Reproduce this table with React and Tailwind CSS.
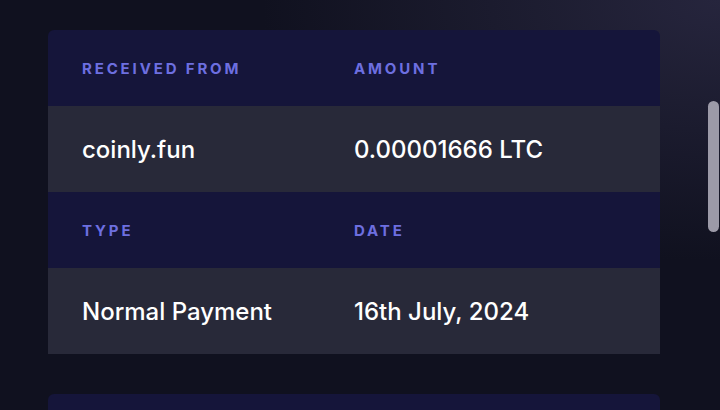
import React from 'react';

const rows = [
  { labels: ['Received From', 'Amount'], values: ['coinly.fun', '0.00001666 LTC'] },
  { labels: ['Type', 'Date'], values: ['Normal Payment', '16th July, 2024'] },
];

const App = () => {
  return (
    <div
      className="relative w-[720px] h-[410px] overflow-hidden bg-[#10111f] bg-[radial-gradient(ellipse_at_100%_0%,#26253d_0%,#10111f_45%)] pl-[48px] pt-[30px]"
      style={{ fontFamily: 'Inter, "Noto Sans", sans-serif' }}
    >
      {/* Details card */}
      <div className="w-[612px] rounded-t-[6px] overflow-hidden">
        {rows.map((row, i) => (
          <div key={i}>
            <div className="grid grid-cols-[272px_1fr] h-[76px] items-center px-[34px] bg-[#15153a]">
              {row.labels.map((l) => (
                <span
                  key={l}
                  className="text-[15px] font-bold uppercase tracking-[0.19em] text-[#6d6fe0] leading-none"
                >
                  {l}
                </span>
              ))}
            </div>
            <div className="grid grid-cols-[272px_1fr] h-[86px] items-center px-[34px] pt-[2px] bg-[#282939]">
              {row.values.map((v) => (
                <span key={v} className="text-[24px] font-medium text-white leading-none">
                  {v}
                </span>
              ))}
            </div>
          </div>
        ))}
      </div>

      {/* Next card peeking in */}
      <div className="mt-[40px] w-[612px] h-[40px] rounded-t-[6px] bg-[#15153a]" />

      {/* Scrollbar */}
      <div className="absolute left-[708px] top-[101px] w-[11px] h-[131px] rounded-full bg-[#9c9aa8]" />
    </div>
  );
};

export default App;
